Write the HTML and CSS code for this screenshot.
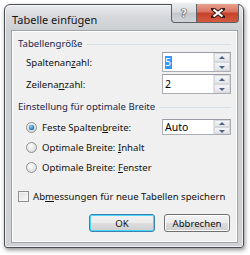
FILE: index.html
```html
<!DOCTYPE html>
<html lang="de">
<head>
<meta charset="utf-8">
<title>Tabelle einfügen</title>
<link rel="stylesheet" href="styles.css">
</head>
<body>
<div class="window">
  <div class="titlebar">
    <span class="title">Tabelle einfügen</span>
    <div class="caption-buttons">
      <div class="cbtn help"><span>?</span></div>
      <div class="cbtn close">
        <svg width="14" height="10" viewBox="0 0 14 10">
          <path d="M2 1 L12 9 M12 1 L2 9" stroke="#3a1a14" stroke-width="4" stroke-linecap="square"/>
          <path d="M2.5 1.5 L11.5 8.5 M11.5 1.5 L2.5 8.5" stroke="#ffffff" stroke-width="2.2"/>
        </svg>
      </div>
    </div>
  </div>
  <div class="client">
    <div class="group-head"><span>Tabellengröße</span><i class="rule"></i></div>
    <div class="field-row">
      <span class="lbl">Spaltenan<u>z</u>ahl:</span>
      <div class="spin"><span class="val"><span class="sel">5</span></span><div class="arrows"><b class="up"></b><b class="down"></b></div></div>
    </div>
    <div class="field-row second">
      <span class="lbl">Zeilena<u>n</u>zahl:</span>
      <div class="spin"><span class="val">2</span><div class="arrows"><b class="up"></b><b class="down"></b></div></div>
    </div>
    <div class="group-head g2"><span>Einstellung für optimale Breite</span><i class="rule"></i></div>
    <div class="field-row radio-first">
      <span class="opt"><span class="radio on"><i></i></span><span class="rlbl">Feste Spalten<u>b</u>reite:</span></span>
      <div class="spin small"><span class="val">Auto</span><div class="arrows"><b class="up"></b><b class="down"></b></div></div>
    </div>
    <div class="radio-row">
      <span class="opt"><span class="radio"></span><span class="rlbl">Optimale Breite: <u>I</u>nhalt</span></span>
    </div>
    <div class="radio-row">
      <span class="opt"><span class="radio"></span><span class="rlbl">Optimale Breite: <u>F</u>enster</span></span>
    </div>
    <div class="check-row">
      <span class="check"></span>
      <span class="clbl">Ab<u>m</u>essungen für neue Tabellen speichern</span>
    </div>
    <div class="buttons">
      <div class="btn default">OK</div>
      <div class="btn">Abbrechen</div>
    </div>
  </div>
</div>
</body>
</html>
```

FILE: styles.css
```css
html, body {
  margin: 0;
  padding: 0;
  background: #ffffff;
}
body {
  width: 250px;
  height: 255px;
  overflow: hidden;
  font-family: "Noto Sans", "Open Sans", sans-serif;
  font-size: 9.6px;
  color: #111111;
}
u { text-decoration: underline; text-underline-offset: 1px; }

.window {
  box-sizing: border-box;
  margin: 4px 0 0 4px;
  width: 240px;
  height: 244px;
  border: 1px solid #4a4d52;
  border-radius: 6px 6px 3px 3px;
  background: linear-gradient(to bottom, #e9ebee 0px, #d6d8db 12px, #cdd0d3 25px, #cfd1d4 100%);
  box-shadow: 1px 2px 4px rgba(0,0,0,0.45), inset 0 0 0 1px rgba(255,255,255,0.65);
  padding: 0 5px 4px 6px;
  display: flex;
  flex-direction: column;
}

.titlebar {
  height: 25px;
  display: flex;
  justify-content: space-between;
  align-items: flex-start;
}
.title {
  margin: 8px 0 0 1px;
  font-size: 11px;
  line-height: 14px;
  color: #141414;
  white-space: nowrap;
}
.caption-buttons {
  display: flex;
  margin-top: -1px;
  margin-right: -1px;
}
.cbtn {
  box-sizing: border-box;
  height: 19px;
  border: 1px solid #5d6066;
  border-top: none;
  display: flex;
  align-items: center;
  justify-content: center;
}
.help {
  width: 25px;
  border-radius: 0 0 0 4px;
  border-right: none;
  background: linear-gradient(to bottom, #eaecef 0%, #d7dade 45%, #c3c7cc 50%, #d1d4d8 100%);
}
.help span {
  font-family: "DejaVu Sans", sans-serif;
  font-weight: bold;
  font-size: 11px;
  color: #f4f4f4;
  text-shadow: 0 0 1px #333, 0 0 1px #333, 0 0 1px #333;
  line-height: 1;
}
.close {
  width: 43px;
  border-radius: 0 0 4px 0;
  background: linear-gradient(to bottom, #e8a08f 0%, #d8735f 45%, #c5412a 50%, #d25a40 100%);
}

.client {
  box-sizing: border-box;
  height: 213px;
  background: #f0f0f0;
  border: 1px solid #9ea3a8;
  box-shadow: inset 0 0 0 1px #ffffff;
  padding: 6px 6px 0 6px;
  display: flex;
  flex-direction: column;
  white-space: nowrap;
}

.group-head {
  display: flex;
  align-items: center;
  height: 14px;
  line-height: 14px;
}
.group-head span { white-space: nowrap; color: #15264f; }
.group-head .rule {
  flex: 1;
  height: 1px;
  margin-left: 4px;
  background: #d5dfe5;
}
.group-head.g2 { margin-top: 6px; }

.field-row {
  display: grid;
  grid-template-columns: 1fr 69px;
  align-items: center;
  height: 20px;
  margin-top: 1px;
  padding-left: 8px;
}
.field-row.second { margin-top: 2px; }
.field-row.radio-first { margin-top: 3px; }

.spin {
  box-sizing: border-box;
  width: 69px;
  height: 20px;
  border: 1px solid #abadb3;
  border-top-color: #999ca3;
  background: #ffffff;
  display: flex;
  align-items: stretch;
}
.spin .val {
  flex: 1;
  padding-left: 2px;
  display: flex;
  align-items: center;
  font-size: 10.5px;
  color: #000;
}
.sel {
  background: #3399ff;
  color: #ffffff;
  line-height: 13px;
  padding: 0 1px 0 0;
}
.spin.small {
  height: 16px;
}
.arrows {
  width: 16px;
  flex: none;
  display: flex;
  flex-direction: column;
  border-left: 1px solid #e2e3e5;
}
.arrows b {
  flex: 1;
  position: relative;
  background: linear-gradient(to bottom, #f4f5f6, #e2e4e7);
  border: 1px solid #d6d8dc;
}
.arrows b::after {
  content: "";
  position: absolute;
  left: 50%;
  top: 50%;
  margin-left: -3px;
  border-left: 3px solid transparent;
  border-right: 3px solid transparent;
}
.arrows .up::after { margin-top: -2px; border-bottom: 3px solid #4d6185; }
.arrows .down::after { margin-top: -1px; border-top: 3px solid #4d6185; }

.radio-row {
  display: flex;
  align-items: center;
  height: 20px;
  padding-left: 8px;
}
.opt {
  display: flex;
  align-items: center;
}
.radio {
  box-sizing: border-box;
  flex: none;
  width: 11px;
  height: 11px;
  margin-right: 5px;
  border-radius: 50%;
  border: 1px solid #8e8f8f;
  background: radial-gradient(circle at 40% 35%, #ffffff 0%, #e8e8e8 50%, #d4d4d4 100%);
  display: flex;
  align-items: center;
  justify-content: center;
}
.radio.on i {
  width: 5px;
  height: 5px;
  border-radius: 50%;
  background: radial-gradient(circle at 40% 35%, #8fd1f8 0%, #1f7fc4 60%, #0c4f8a 100%);
  box-shadow: 0 0 1px #0d3b66;
}

.check-row {
  display: flex;
  align-items: center;
  height: 20px;
  margin-top: 9px;
}
.check {
  box-sizing: border-box;
  flex: none;
  width: 11px;
  height: 11px;
  border: 1px solid #8e8f8f;
  background: linear-gradient(135deg, #dcdcdc, #fbfbfb);
  box-shadow: inset 0 0 0 1px #f4f4f4;
  margin-right: 4px;
}

.buttons {
  display: flex;
  justify-content: flex-end;
  gap: 9px;
  margin-top: 8px;
  padding-right: 1px;
}
.btn {
  box-sizing: border-box;
  width: 66px;
  height: 18px;
  border: 1px solid #707070;
  border-radius: 3px;
  background: linear-gradient(to bottom, #f2f2f2 0%, #ebebeb 48%, #dddddd 52%, #cfcfcf 100%);
  box-shadow: inset 0 0 0 1px #fcfcfc;
  display: flex;
  align-items: center;
  justify-content: center;
  color: #111;
}
.btn.default {
  border-color: #3c7fb1;
  box-shadow: inset 0 0 0 1px #48d8fb;
}
```
